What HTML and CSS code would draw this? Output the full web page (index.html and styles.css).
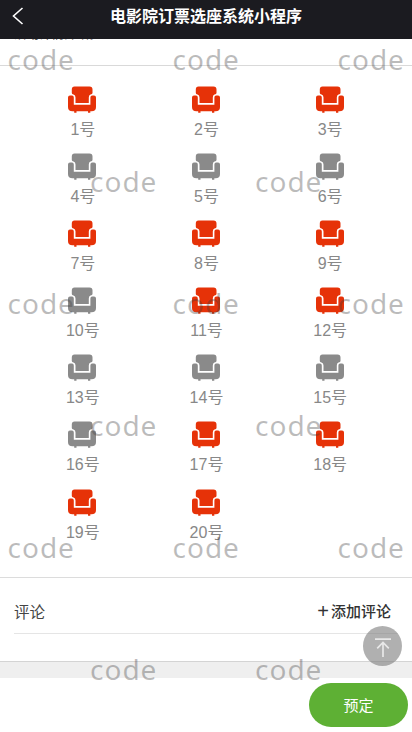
FILE: index.html
```html
<!DOCTYPE html>
<html lang="zh-CN">
<head>
<meta charset="utf-8">
<title>电影院订票选座系统小程序</title>
<link rel="stylesheet" href="styles.css">
</head>
<body>
<svg class="defs" aria-hidden="true">
  <symbol id="seat" viewBox="0 0 28 27">
    <path d="M6.500 0.500H21.500Q24.500 .5 24.500 3.500V7Q24.500 8.300 22.500 8.600Q20.800 9.200 20.800 11.500V17H7.500V11.500Q7.500 9.200 5.500 8.600Q3.800 8.300 3.800 7V3.500Q3.800 .5 6.500 .5Z"/>
    <path d="M2 9.500H4Q5.800 9.500 5.800 11.500V18.800H22.400V11.500Q22.400 9.500 24.200 9.500H26Q28 9.500 28 11.500V21Q28 25.300 23.500 25.300H22.300V26.700H20V25.300H8.500V26.700H6.200V25.300H4.500Q0 25.300 0 21V11.500Q0 9.500 2 9.500Z"/>
  </symbol>
</svg>
<div class="app">
  <header class="bar">
    <svg class="back" viewBox="0 0 12 18"><path d="M10.500 1 1.500 9l9 8"/></svg>
    <h1>电影院订票选座系统小程序</h1>
  </header>
  <div class="intro"><p>活动详情介绍。</p></div>
  <main class="seats" id="seats"></main>
  <section class="comments">
    <div class="head"><span>评论</span><b><i>+</i>添加评论</b></div>
  </section>
  <div class="gap"></div>
  <footer><button class="book">预定</button></footer>
  <div class="totop"><svg viewBox="0 0 16 19"><path d="M0 1.200H16M8 19V4.500M2.200 10.300 8 4.500l5.800 5.800"/></svg></div>
  <div class="marks" id="marks"></div>
</div>
<script src="app.js"></script>
</body>
</html>
```
FILE: styles.css
```css
* { box-sizing: border-box; }
body { margin: 0; font-family: "Liberation Sans", "Noto Sans CJK SC", sans-serif; background: #fff; }
.defs { position: absolute; width: 0; height: 0; }
.app { position: relative; width: 412px; height: 732px; overflow: hidden; display: flex; flex-direction: column; }
.bar { height: 39px; flex: none; background: #1b1b20; color: #fff; display: flex; align-items: center; justify-content: center; padding-bottom: 6px; position: relative; }
.bar h1 { margin: 0; font-size: 16px; line-height: 24px; font-weight: 700; }
.back { position: absolute; left: 12px; top: 7px; width: 12px; height: 18px; fill: none; stroke: #fff; stroke-width: 1.6; }
.intro { height: 27px; flex: none; overflow: hidden; border-bottom: 1px solid #d9d9d9; padding-left: 14px; }
.intro p { margin: -14px 0 0; font-size: 12.5px; line-height: 20px; color: #555; }
.seats { height: 511px; flex: none; padding: 20px 20.5px 0; display: grid; grid-template-columns: repeat(3, 1fr); grid-auto-rows: 67.1px; }
.seat { display: flex; flex-direction: column; align-items: center; color: #888; font-size: 16px; line-height: 20px; gap: 7px; }
.seat svg { width: 28px; height: 27px; fill: #8a8a8a; }
.seat.free svg { fill: #e63208; }
.seat span { padding-left: 1px; }
.comments { height: 84px; flex: none; border-top: 1px solid #dcdcdc; padding: 0 14px; }
.head { height: 56px; border-bottom: 1px solid #e5e5e5; display: flex; justify-content: space-between; align-items: center; padding: 10px 7px 0 0; font-size: 15.5px; color: #444; }
.head b { color: #333; font-size: 15px; font-weight: 500; display: flex; align-items: center; }
.head i { font-style: normal; font-size: 20px; margin-right: 2px; line-height: 20px; }
.gap { height: 17px; flex: none; background: #efefef; border-top: 1px solid #d4d4d4; }
footer { flex: 1; display: flex; justify-content: flex-end; padding: 5px 4px 0 0; }
.book { width: 99px; height: 44px; border: 0; border-radius: 22px; background: #5eb034; color: #fff; font: 15px "Noto Sans CJK SC", sans-serif; padding: 0 0 2px; }
.totop { position: absolute; left: 363px; top: 626px; width: 39px; height: 40px; border-radius: 50%; background: rgba(130,130,130,.63); display: flex; justify-content: center; align-items: center; }
.totop svg { width: 16px; height: 19px; fill: none; stroke: #e8e8e8; stroke-width: 1.7; margin-top: 2px; }
.marks { position: absolute; inset: 0; pointer-events: none; color: rgba(60,60,60,.34); font: 28px/30px "Noto Sans", sans-serif; }
.mark { position: absolute; letter-spacing: 1px; }
```
FILE: app.js
```js
const free = new Set([1, 2, 3, 7, 8, 9, 11, 12, 17, 18, 19, 20]);
const seats = document.getElementById('seats');
for (let n = 1; n <= 20; n++) {
  const el = document.createElement('div');
  el.className = free.has(n) ? 'seat free' : 'seat';
  el.innerHTML = `<svg><use href="#seat"/></svg><span>${n}号</span>`;
  seats.append(el);
}
const marks = document.getElementById('marks');
for (let row = 0; row < 6; row++) {
  for (let col = 0; col < (row % 2 ? 2 : 3); col++) {
    const m = document.createElement('span');
    m.className = 'mark';
    m.textContent = 'code';
    m.style.left = `${7.5 + col * 165 + (row % 2 ? 82.5 : 0)}px`;
    m.style.top = `${44 + row * 122}px`;
    marks.append(m);
  }
}
```
